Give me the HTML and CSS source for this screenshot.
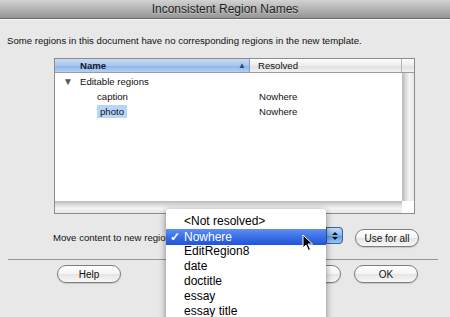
FILE: index.html
```html
<!DOCTYPE html>
<html lang="en">
  <head>
    <meta charset="UTF-8">
    <title>Inconsistent Region Names</title>
    <link rel="stylesheet" href="styles.css">
  </head>
  <body>
    <div class="titlebar">Inconsistent Region Names</div>
    <p class="intro">Some regions in this document have no corresponding regions in the new template.</p>

    <div class="table">
      <div class="thead">
        <div class="th th-name">Name <span class="sort">&#9650;</span></div>
        <div class="th th-resolved">Resolved</div>
        <div class="th th-corner"></div>
      </div>
      <div class="tbody">
        <div class="rows">
          <div class="row">
            <span class="cell-name"><span class="twisty">&#9660;</span>Editable regions</span>
            <span class="cell-resolved"></span>
          </div>
          <div class="row">
            <span class="cell-name indent">caption</span>
            <span class="cell-resolved">Nowhere</span>
          </div>
          <div class="row">
            <span class="cell-name indent"><span class="picked">photo</span></span>
            <span class="cell-resolved">Nowhere</span>
          </div>
        </div>
        <div class="vscroll"></div>
      </div>
      <div class="tfoot">
        <div class="hscroll"></div>
        <div class="scroll-corner"></div>
      </div>
    </div>

    <div class="move-row">
      <span class="label">Move content to new region:</span>
      <div class="popup"><span class="popup-arrows"><i class="up"></i><i class="down"></i></span></div>
      <button class="btn btn-all">Use for all</button>
    </div>

    <div class="sep"></div>

    <div class="buttons">
      <button class="btn">Help</button>
      <button class="btn btn-cancel"></button>
      <button class="btn btn-ok">OK</button>
    </div>

    <ul class="menu">
      <li><span class="check"></span>&lt;Not resolved&gt;</li>
      <li class="current"><span class="check">&#10003;</span>Nowhere</li>
      <li><span class="check"></span>EditRegion8</li>
      <li><span class="check"></span>date</li>
      <li><span class="check"></span>doctitle</li>
      <li><span class="check"></span>essay</li>
      <li><span class="check"></span>essay title</li>
    </ul>

    <svg class="cursor" width="12" height="18" viewBox="0 0 12 18">
      <path d="M1 1 L1 14 L4 11 L6.5 16.5 L8.5 15.5 L6 10 L10.5 10 Z" fill="#000" stroke="#fff" stroke-width="1"/>
    </svg>
  </body>
</html>
```

FILE: styles.css
```css
* { box-sizing: border-box; }
body {
  margin: 0;
  background: #e8e8e8;
  font-family: "Liberation Sans", Arial, sans-serif;
  font-size: 9.6px;
  color: #111;
  position: relative;
  height: 317px;
  overflow: hidden;
}
.titlebar {
  height: 19px;
  line-height: 18px;
  text-align: center;
  font-size: 12px;
  color: #1e1e1e;
  text-shadow: 0 1px 0 rgba(255,255,255,0.35);
  background: linear-gradient(#d2d2d2, #b4b4b4 50%, #959595);
  border-bottom: 1px solid #6a6a6a;
  box-shadow: 0 1px 0 #f6f6f6;
}
.intro {
  margin: 15px 0 0 7px;
  line-height: 14px;
}

/* region table */
.table {
  margin: 10px 0 0 54px;
  width: 361px;
  height: 156px;
  border: 1px solid #8c8c8c;
  background: #fff;
  display: flex;
  flex-direction: column;
}
.thead {
  display: flex;
  height: 14px;
  border-bottom: 1px solid #9c9c9c;
  line-height: 13px;
}
.th {
  background: linear-gradient(#fdfdfd, #ececec 50%, #dedede 51%, #f1f1f1);
  border-right: 1px solid #b4b4b4;
}
.th-name {
  width: 195px;
  padding-left: 25px;
  font-weight: bold;
  color: #0e1a33;
  background: linear-gradient(#c9dcf5, #a9c6ee 50%, #8db3e7 51%, #b4d0f4);
  border-right: 1px solid #7f9dc8;
  position: relative;
}
.sort {
  position: absolute;
  right: 3px;
  top: 0;
  font-size: 8px;
  color: #2b4a7a;
}
.th-resolved {
  flex: 1;
  padding-left: 8px;
}
.th-corner {
  width: 12px;
  border-right: none;
}
.tbody {
  flex: 1;
  display: flex;
}
.rows {
  flex: 1;
  padding-top: 1px;
}
.row {
  display: flex;
  height: 15px;
  line-height: 15px;
}
.cell-name {
  width: 195px;
  padding-left: 8px;
}
.cell-name.indent { padding-left: 42px; }
.twisty {
  display: inline-block;
  width: 17px;
  font-size: 10px;
  color: #5a5a5a;
}
.picked {
  background: #b6d5fb;
  padding: 1px 3px;
}
.cell-resolved { padding-left: 9px; }
.vscroll {
  width: 12px;
  background: linear-gradient(90deg, #b9b9b9, #d9d9d9 30%, #f4f4f4 60%, #e8e8e8);
}
.tfoot {
  display: flex;
  height: 12px;
}
.hscroll {
  flex: 1;
  background: linear-gradient(#b9b9b9, #d9d9d9 30%, #f4f4f4 60%, #e8e8e8);
}
.scroll-corner {
  width: 12px;
  background: #fff;
}

/* move row */
.move-row {
  display: flex;
  align-items: center;
  height: 20px;
  margin-top: 13px;
  padding: 0 31px 0 53px;
}
.label { white-space: nowrap; }
.popup {
  margin-left: auto;
  width: 120px;
  height: 17px;
  border: 1px solid #8a8a8a;
  border-radius: 4px;
  background: #fff;
  display: flex;
  justify-content: flex-end;
  align-self: flex-start;
}
.popup-arrows {
  width: 17px;
  margin: -1px -1px -1px 0;
  border: 1px solid #3d5f9e;
  border-radius: 0 4px 4px 0;
  background: linear-gradient(#c5dcf7, #85b3ec 50%, #5a95e2 51%, #9cc8f6);
  display: flex;
  flex-direction: column;
  align-items: center;
  justify-content: center;
  gap: 2px;
}
.popup-arrows i {
  width: 0;
  height: 0;
  border-left: 3px solid transparent;
  border-right: 3px solid transparent;
}
.popup-arrows .up { border-bottom: 3px solid #111; }
.popup-arrows .down { border-top: 3px solid #111; }

.btn {
  font: inherit;
  font-size: 10px;
  color: #111;
  height: 18px;
  width: 64px;
  padding: 0;
  border: 1px solid #7e7e7e;
  border-radius: 9px;
  background: linear-gradient(#ffffff, #f4f4f4 50%, #e4e4e4 51%, #f8f8f8);
  box-shadow: 0 1px 1px rgba(0,0,0,0.15);
}
.btn-all { margin-left: 12px; align-self: flex-end; }

.sep {
  margin: 12px 12px 0 8px;
  height: 1px;
  background: #939393;
}
.buttons {
  display: flex;
  margin-top: 5px;
  padding: 0 32px 0 57px;
}
.btn-cancel { margin-left: auto; width: 74px; }
.btn-ok { margin-left: 13px; }

/* open popup menu */
.menu {
  position: absolute;
  left: 166px;
  top: 209px;
  width: 160px;
  height: 120px;
  margin: 0;
  padding: 5px 0 0;
  list-style: none;
  background: #fff;
  font-size: 12px;
  box-shadow: 0 2px 7px rgba(0,0,0,0.45);
  border-radius: 3px 3px 0 0;
}
.menu li {
  display: flex;
  height: 15px;
  line-height: 15px;
  color: #000;
}
.menu li.current {
  height: 16px;
  line-height: 16px;
  margin: 0 0 -1px;
  color: #fff;
  background: linear-gradient(#5e8ff2, #3a6fe6 50%, #1f55d8);
}
.check {
  width: 18px;
  flex: none;
  padding-left: 4px;
  font-size: 12px;
  font-weight: bold;
}
.cursor {
  position: absolute;
  left: 302px;
  top: 234px;
}
```
